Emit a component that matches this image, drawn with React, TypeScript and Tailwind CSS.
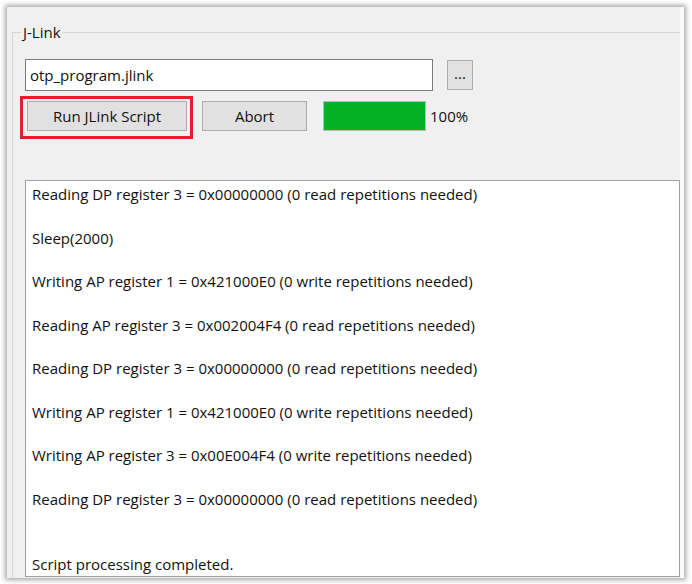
const lines: string[] = [
  "Reading DP register 3 = 0x00000000 (0 read repetitions needed)",
  "",
  "Sleep(2000)",
  "",
  "Writing AP register 1 = 0x421000E0 (0 write repetitions needed)",
  "",
  "Reading AP register 3 = 0x002004F4 (0 read repetitions needed)",
  "",
  "Reading DP register 3 = 0x00000000 (0 read repetitions needed)",
  "",
  "Writing AP register 1 = 0x421000E0 (0 write repetitions needed)",
  "",
  "Writing AP register 3 = 0x00E004F4 (0 write repetitions needed)",
  "",
  "Reading DP register 3 = 0x00000000 (0 read repetitions needed)",
  "",
  "",
  "Script processing completed.",
];

function WinButton({ label, className }: { label: string; className: string }) {
  return (
    <button
      className={`flex items-center justify-center border border-[#adadad] bg-[#e1e1e1] text-[15px] text-[#111] ${className}`}
    >
      {label}
    </button>
  );
}

export default function App() {
  return (
    <div
      className="h-[584px] w-[692px] overflow-hidden bg-white pt-[7px] pl-[7px]"
      style={{ fontFamily: '"Open Sans", "Noto Sans", sans-serif' }}
    >
      <div className="h-[571px] w-[677px] overflow-hidden border-r-[4px] border-[#fafafa] bg-[#f0f0f0] shadow-[0_0_5px_2px_rgba(0,0,0,0.35)] pt-[25px] pl-[5px]">
        {/* group box */}
        <div className="relative h-[600px] border-t border-l border-[#d5d5d5] pt-[26px] pl-[12px]">
          <span className="absolute -top-[11px] left-[8px] bg-[#f0f0f0] px-[2px] text-[15px] leading-[20px] text-[#111]">
            J-Link
          </span>

          <div className="flex items-center gap-[14px]">
            <div className="flex h-[32px] w-[408px] items-center border border-[#7a7a7a] bg-white pl-[4px] text-[15px] text-[#111]">
              otp_program.jlink
            </div>
            <WinButton label="..." className="h-[30px] w-[26px] pb-[4px] text-[11px]" />
          </div>

          <div className="mt-[5px] flex items-start">
            <div className="ml-[-5px] border-[3px] border-[#e0202b] pt-[2px] pr-[3px] pb-[5px] pl-[4px]">
              <WinButton label="Run JLink Script" className="h-[30px] w-[160px]" />
            </div>
            <WinButton label="Abort" className="mt-[5px] ml-[9px] h-[30px] w-[105px]" />
            <div className="mt-[5px] ml-[16px] h-[30px] w-[103px] border border-[#bcbcbc] bg-[#e6e6e6]">
              <div className="h-full w-full bg-[#06b025]" />
            </div>
            <span className="mt-[5px] ml-[4px] text-[15px] leading-[30px] text-[#111]">100%</span>
          </div>

          {/* log output */}
          <div className="mt-[41px] border border-[#a0a0a0] bg-white pt-[3px] pl-[6px] text-[15px] leading-[21.75px] text-[#111]">
            {lines.map((line, i) => (
              <div key={i} className="h-[21.75px] whitespace-pre">
                {line}
              </div>
            ))}
          </div>
        </div>
      </div>
    </div>
  );
}
